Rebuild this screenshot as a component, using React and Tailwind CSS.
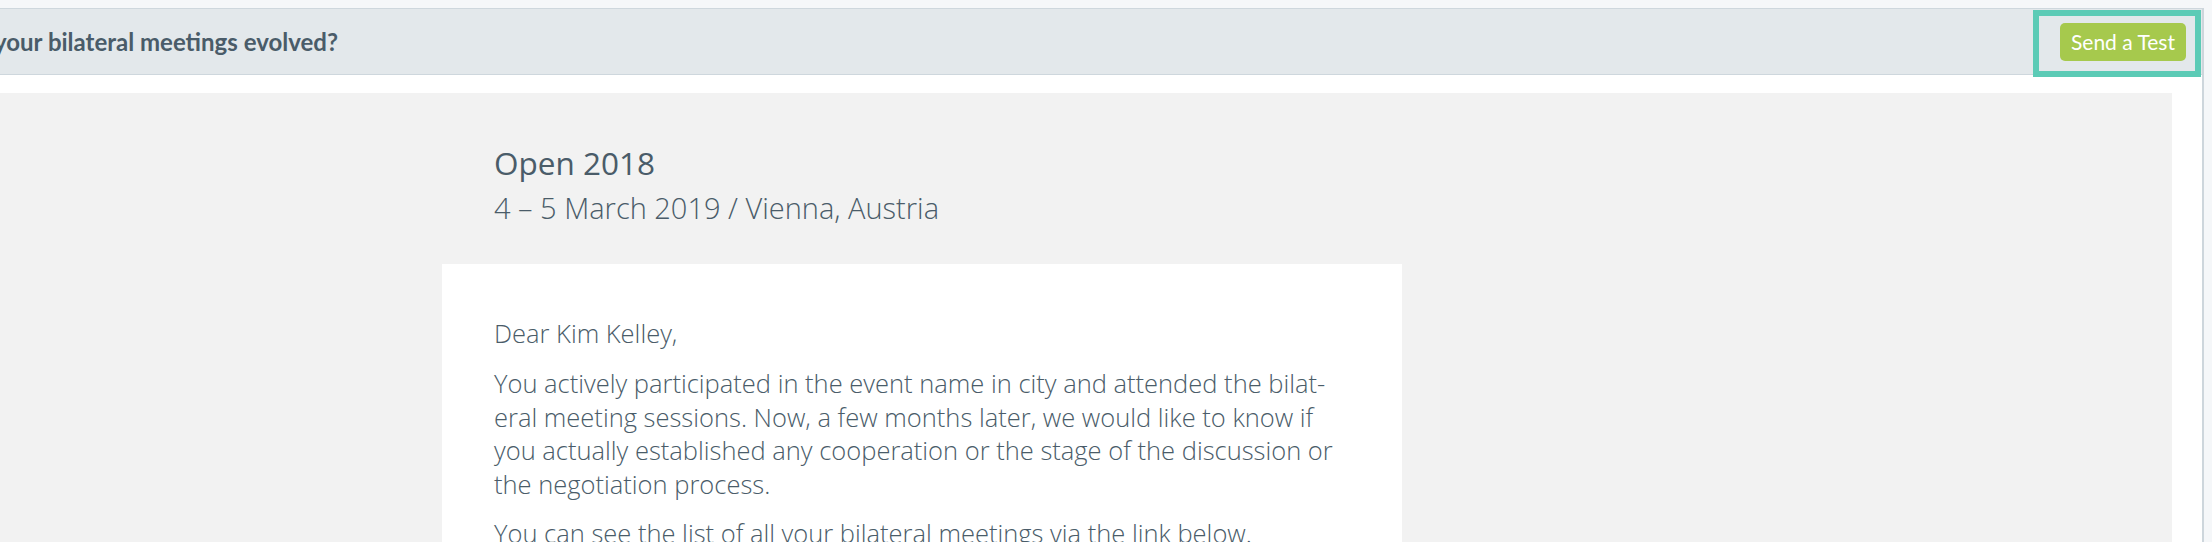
import React from 'react';

const bodyFont = { fontFamily: '"Open Sans", "Liberation Sans", sans-serif' };
const uiFont = { fontFamily: 'Lato, "Liberation Sans", sans-serif' };

function Header() {
  return (
    <div className="relative flex h-[67px] items-center justify-between border-y border-[#ced7dd] bg-[#e3e8eb]">
      <div className="overflow-hidden">
        <p
          className="-ml-[6px] whitespace-nowrap text-[24px] font-bold text-[#4a5c69]"
          style={uiFont}
        >
          your bilateral meetings evolved?
        </p>
      </div>
      <div className="relative mr-[16px]">
        {/* highlight frame around the action */}
        <span className="pointer-events-none absolute -left-[27px] -right-[15px] -top-[13px] -bottom-[16px] border-[6px] border-[#5ccbb6]" />
        <button
          className="flex h-[38px] w-[126px] items-center justify-center rounded-[5px] bg-[#a6c94d] text-[21px] text-white"
          style={uiFont}
        >
          Send a Test
        </button>
      </div>
    </div>
  );
}

function Letter() {
  return (
    <div className="ml-[442px] w-[960px] bg-white px-[52px] pt-[53px] pb-10 text-[25.5px] font-light leading-[33.4px] text-[#4a5c69]">
      <p className="mb-[17px]">Dear Kim Kelley,</p>
      <p className="mb-[16px]">
        You actively participated in the event name in city and attended the bilat-
        <br />
        eral meeting sessions. Now, a few months later, we would like to know if
        <br />
        you actually established any cooperation or the stage of the discussion or
        <br />
        the negotiation process.
      </p>
      <p className="mb-[13px] whitespace-nowrap">You can see the list of all your bilateral meetings via the link below.</p>
    </div>
  );
}

export default function App() {
  return (
    <div className="h-[542px] w-[2212px] overflow-hidden bg-[#f5f7f9] pt-[8px]" style={bodyFont}>
      <div className="w-[2204px] border-r-2 border-[#cdd6dc] bg-white">
        <Header />
        <div className="pt-[18px]">
          <div className="mr-[30px] h-[460px] bg-[#f2f2f2] pt-[47px]">
            <div className="pl-[494px] text-[#4a5c69]">
              <h1 className="text-[31.5px] font-medium leading-[45px]">Open 2018</h1>
              <p className="text-[29px] font-light leading-[45px]">4 – 5 March 2019 / Vienna, Austria</p>
            </div>
            <div className="mt-[34px]">
              <Letter />
            </div>
          </div>
        </div>
      </div>
    </div>
  );
}
